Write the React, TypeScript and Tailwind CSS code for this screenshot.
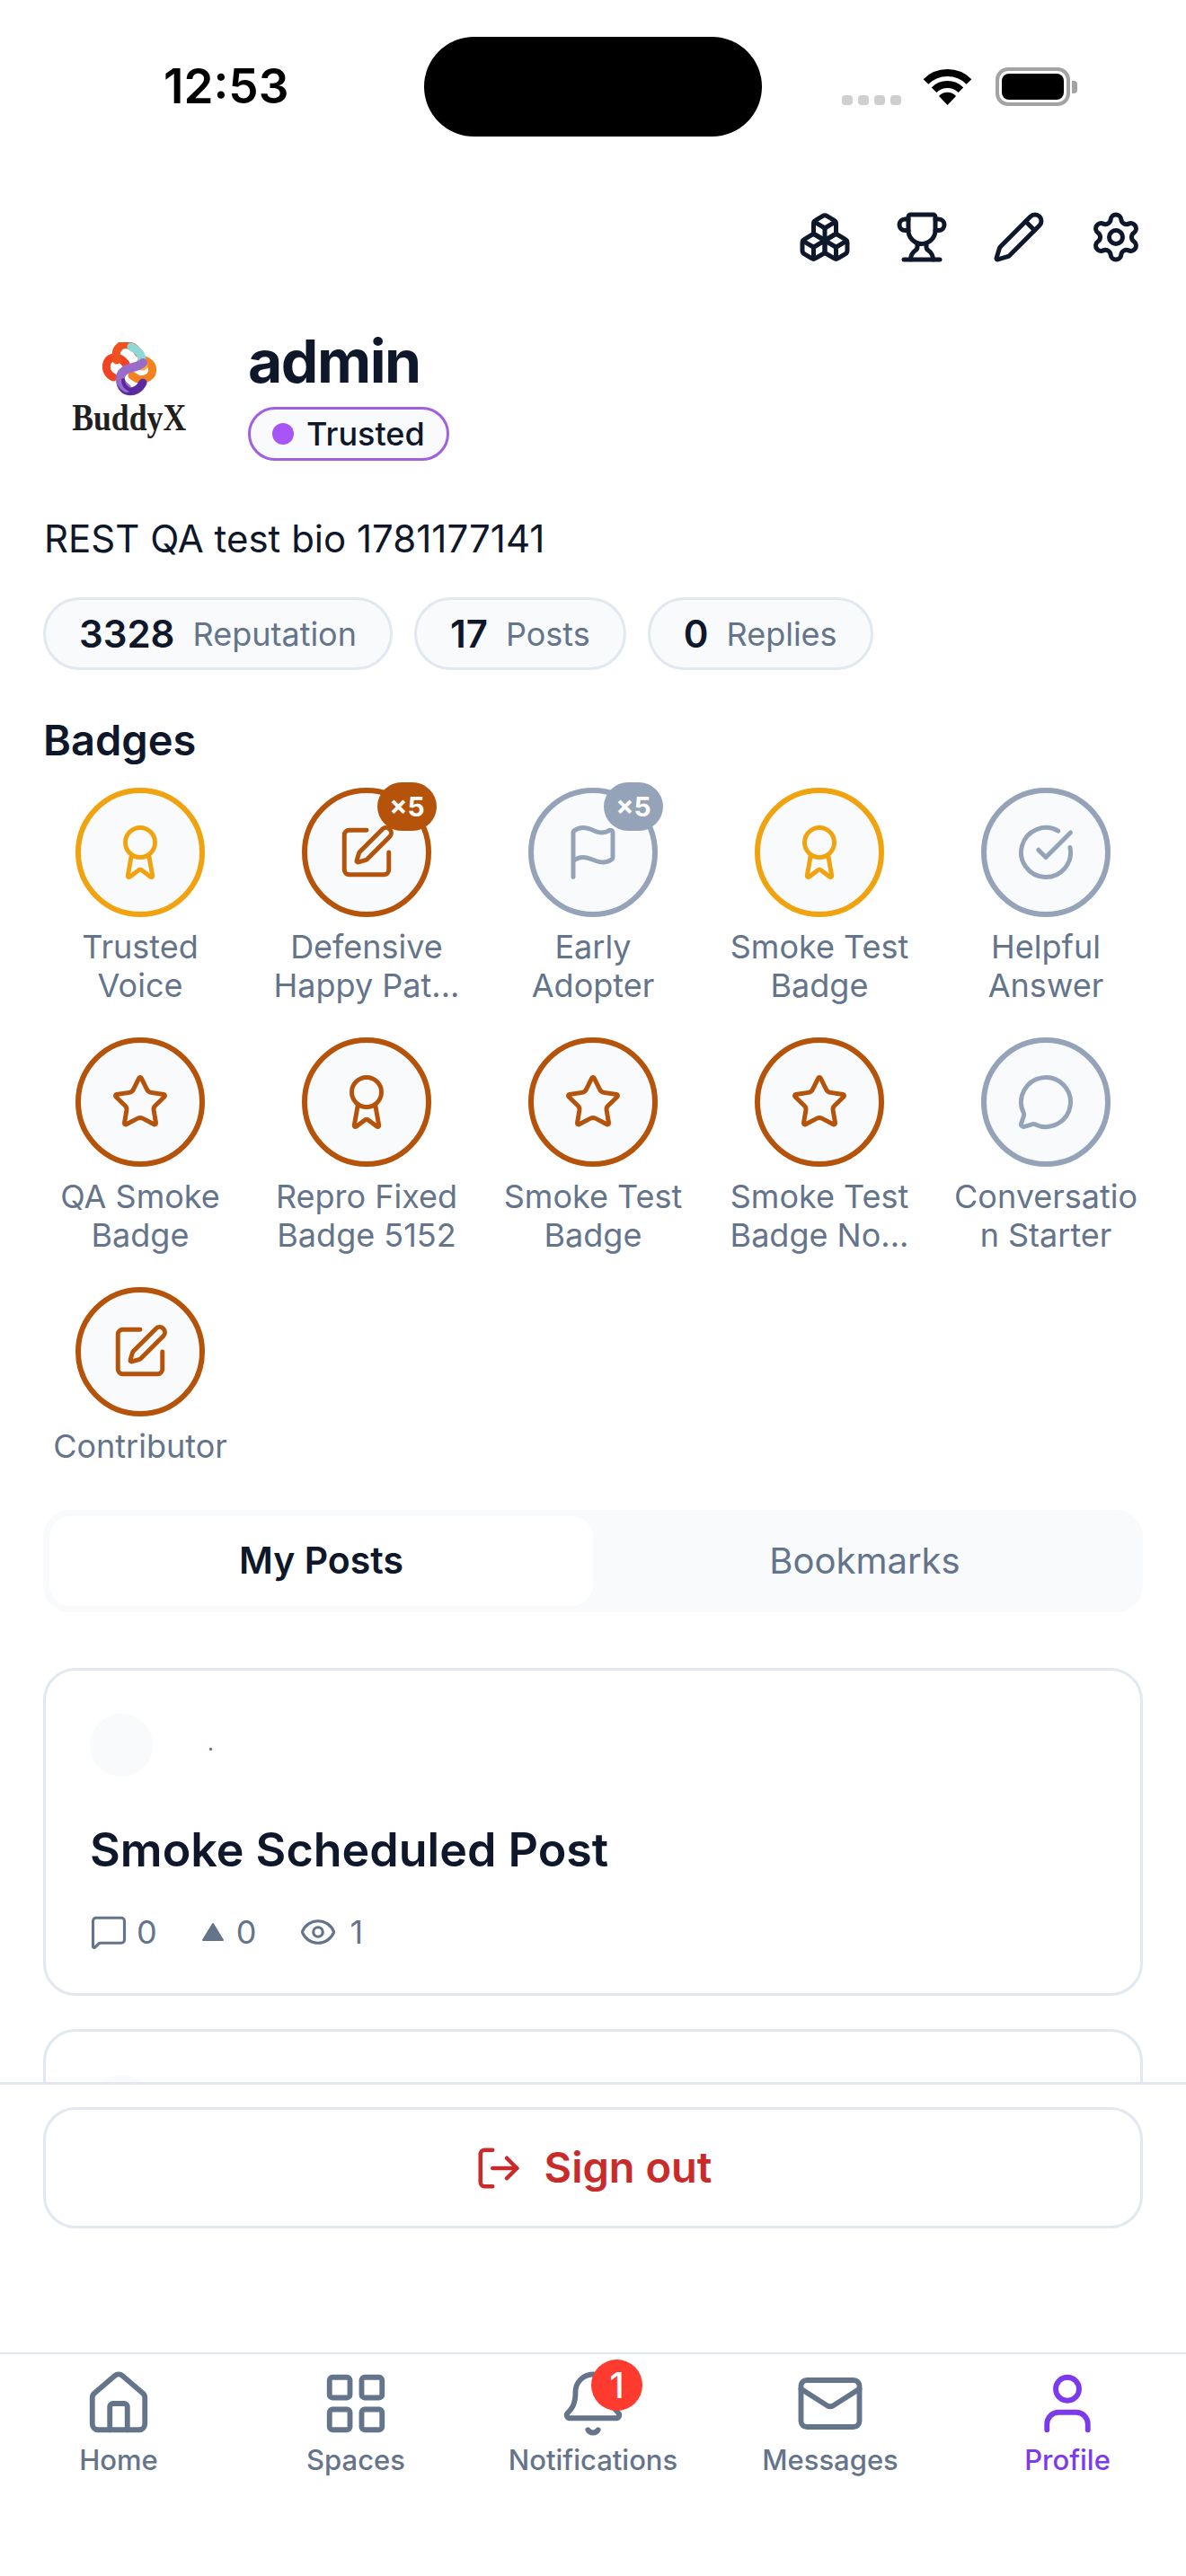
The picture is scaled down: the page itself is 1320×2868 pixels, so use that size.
import { Award, Bell, Boxes, CircleCheckBig, Eye, Flag, House, LayoutGrid, LogOut, Mail, MessageCircle, MessageSquare, Pencil, Settings, SquarePen, Star, Trophy, User } from "lucide-react"

const GOLD = { ring: "border-[#f0a30f]", icon: "text-[#f0a30f]", pill: "bg-[#f0a30f]" }
const BRONZE = { ring: "border-[#b45309]", icon: "text-[#b45309]", pill: "bg-[#b45309]" }
const GRAY = { ring: "border-[#94a3b8]", icon: "text-[#94a3b8]", pill: "bg-[#94a3b8]" }

const badges = [
  { label: "Trusted Voice", icon: Award, tier: GOLD },
  { label: "Defensive Happy Pat...", icon: SquarePen, tier: BRONZE, count: 5 },
  { label: "Early Adopter", icon: Flag, tier: GRAY, count: 5 },
  { label: "Smoke Test Badge", icon: Award, tier: GOLD },
  { label: "Helpful Answer", icon: CircleCheckBig, tier: GRAY },
  { label: "QA Smoke Badge", icon: Star, tier: BRONZE },
  { label: "Repro Fixed Badge 5152", icon: Award, tier: BRONZE },
  { label: "Smoke Test Badge", icon: Star, tier: BRONZE },
  { label: "Smoke Test Badge No...", icon: Star, tier: BRONZE },
  { label: "Conversation Starter", icon: MessageCircle, tier: GRAY },
  { label: "Contributor", icon: SquarePen, tier: BRONZE },
]

const stats = [
  { value: "3328", label: "Reputation" },
  { value: "17", label: "Posts" },
  { value: "0", label: "Replies" },
]

const tabs = [
  { label: "Home", icon: House },
  { label: "Spaces", icon: LayoutGrid },
  { label: "Notifications", icon: Bell, unread: 1 },
  { label: "Messages", icon: Mail },
  { label: "Profile", icon: User, active: true },
]

function StatusBar() {
  return (
    <div className="grid grid-cols-[1fr_376px_1fr] pt-[41px]">
      <div className="flex h-[111px] items-center pl-[182px] text-[53px] font-semibold leading-none text-black">12:53</div>
      <div className="h-[111px] rounded-[56px] bg-black" />
      <div className="flex h-[111px] items-start pl-[89px] pt-[34px]">
        <div className="mt-[31px] flex gap-[6px]">
          <span className="h-[11px] w-[12px] rounded-[4px] bg-[#cfcfcf]" />
          <span className="h-[11px] w-[12px] rounded-[4px] bg-[#cfcfcf]" />
          <span className="h-[11px] w-[12px] rounded-[4px] bg-[#cfcfcf]" />
          <span className="h-[11px] w-[12px] rounded-[4px] bg-[#cfcfcf]" />
        </div>
        <svg className="ml-[23px]" width="57" height="42" viewBox="0 0 57 42" fill="none">
          <path d="M4.5 16A34 34 0 0 1 52.5 16" stroke="#000" strokeWidth="8" />
          <path d="M13.6 25.2A21 21 0 0 1 43.4 25.2" stroke="#000" strokeWidth="8" />
          <path d="M28.5 42L19 32A13 13 0 0 1 38 32Z" fill="#000" />
        </svg>
        <div className="ml-[25px] flex items-center">
          <div className="h-[43px] w-[83px] rounded-[14px] border-[4px] border-[#a3a3a3] p-[3px]">
            <div className="h-full w-full rounded-[8px] bg-black" />
          </div>
          <div className="ml-[2px] h-[14px] w-[6px] rounded-r-[4px] bg-[#a3a3a3]" />
        </div>
      </div>
    </div>
  )
}

function BuddyXLogo() {
  return (
    <div className="flex h-[192px] w-[192px] flex-col items-center pt-[39px]">
      <svg width="60" height="60" viewBox="0 0 60 60" fill="none">
        <defs>
          <linearGradient id="lobeTop" x1="14" y1="20" x2="46" y2="4">
            <stop offset="0" stopColor="#f0521f" />
            <stop offset="1" stopColor="#fbbf24" />
          </linearGradient>
          <linearGradient id="lobeLeft" x1="8" y1="14" x2="14" y2="46">
            <stop offset="0" stopColor="#ef4423" />
            <stop offset="1" stopColor="#2f9be0" />
          </linearGradient>
          <linearGradient id="lobeBottom" x1="20" y1="50" x2="46" y2="50">
            <stop offset="0" stopColor="#5b2aa0" />
            <stop offset="1" stopColor="#ea2d62" />
          </linearGradient>
        </defs>
        <path d="M47 20C59 25 58 38 47 41C42 43 38 41 33 37" stroke="#f5801f" strokeWidth="9" strokeLinecap="round" />
        <path d="M45 21C50 25 47 30 43 28" stroke="#fbb034" strokeWidth="6" strokeLinecap="round" />
        <path d="M12 39C1 34 2 17 14 17C20 17 23 20 26 24" stroke="url(#lobeLeft)" strokeWidth="9" strokeLinecap="round" />
        <path d="M16 20C12 5 24 0 31 4C36 6 38 8 40 12" stroke="url(#lobeTop)" strokeWidth="9" strokeLinecap="round" />
        <path d="M20 40C18 57 38 60 45 45" stroke="url(#lobeBottom)" strokeWidth="9" strokeLinecap="round" />
        <path d="M32 5C41 10 47 16 42 24" stroke="#8ed8d8" strokeWidth="9" strokeLinecap="round" />
        <path d="M45 23C38 30 24 26 20 38C19 44 22 48 27 51" stroke="#9a6cc9" strokeWidth="10" strokeLinecap="round" />
        <path d="M23 42C23 48 27 52 33 54" stroke="#5a2ba0" strokeWidth="4" strokeLinecap="round" />
      </svg>
      <div className="origin-center scale-x-[0.85] font-['Liberation_Serif'] text-[42px] font-bold leading-[48px] text-[#1f1f1f]">BuddyX</div>
    </div>
  )
}

function BadgeItem({ badge }: { badge: (typeof badges)[number] }) {
  const Icon = badge.icon
  return (
    <div className="flex flex-col items-center">
      <div className={`relative flex h-[144px] w-[144px] items-center justify-center rounded-full border-[6px] bg-[#f8fafc] ${badge.tier.ring}`}>
        <Icon className={`h-[66px] w-[66px] ${badge.tier.icon}`} strokeWidth={1.8} />
        {badge.count && (
          <span className={`absolute right-[-12px] top-[-12px] flex h-[54px] w-[66px] items-center justify-center rounded-full text-[30px] font-bold leading-none text-white ${badge.tier.pill}`}>
            ×{badge.count}
          </span>
        )}
      </div>
      <div className="mt-[12px] w-[216px] break-words text-center text-[36px] leading-[43px] text-[#64748b]">{badge.label}</div>
    </div>
  )
}

function PostCard() {
  return (
    <div className="rounded-[36px] border-[3px] border-[#e2e8f0] bg-white px-[49px] pb-[47px] pt-[48px]">
      <div className="flex items-center">
        <div className="h-[70px] w-[70px] rounded-full bg-[#f8fafc]" />
        <span className="mb-[4px] ml-[61px] text-[24px] leading-none text-[#64748b]">.</span>
      </div>
      <h3 className="mt-[46px] text-[52px] font-semibold leading-[72px] text-[#0f172a]">Smoke Scheduled Post</h3>
      <div className="mt-[34px] flex h-[42px] items-center text-[36px] text-[#64748b]">
        <MessageSquare className="h-[42px] w-[42px]" strokeWidth={1.8} />
        <span className="ml-[10px]">0</span>
        <svg className="ml-[50px]" width="24" height="20" viewBox="0 0 24 20">
          <path d="M12 1L23 19H1Z" fill="#64748b" stroke="#64748b" strokeWidth="2" strokeLinejoin="round" />
        </svg>
        <span className="ml-[14px]">0</span>
        <Eye className="ml-[48px] h-[42px] w-[42px]" strokeWidth={1.8} />
        <span className="ml-[14px]">1</span>
      </div>
    </div>
  )
}

export default function App() {
  return (
    <div className="flex h-[2868px] w-[1320px] flex-col overflow-hidden bg-white font-['Inter',sans-serif]">
      <StatusBar />

      <div className="min-h-0 flex-1 overflow-hidden px-[48px]">
        <div className="mt-[82px] flex justify-end gap-[48px] text-[#0f172a]">
          <Boxes className="h-[60px] w-[60px]" />
          <Trophy className="h-[60px] w-[60px]" />
          <Pencil className="h-[60px] w-[60px]" />
          <Settings className="h-[60px] w-[60px]" />
        </div>

        <div className="mt-[48px] flex items-center gap-[36px]">
          <BuddyXLogo />
          <div>
            <h1 className="text-[66px] font-bold leading-[78px] tracking-[-1.5px] text-[#0f172a]">admin</h1>
            <div className="mt-[12px] inline-flex h-[60px] items-center gap-[14px] rounded-full border-[3px] border-[#a060e0] bg-[#f8fafc] px-[24px]">
              <span className="h-[24px] w-[24px] rounded-full bg-[#a855f7]" />
              <span className="text-[36px] font-medium leading-none text-[#0f172a]">Trusted</span>
            </div>
          </div>
        </div>

        <p className="mt-[36px] ml-[1px] text-[42px] leading-[60px] text-[#0f172a]">REST QA test bio 1781177141</p>

        <div className="mt-[35px] flex gap-[24px]">
          {stats.map((stat) => (
            <div key={stat.label} className="flex h-[81px] items-center gap-[20px] rounded-full border-[3px] border-[#e2e8f0] bg-[#f8fafc] px-[37px]">
              <span className="text-[42px] font-semibold text-[#0f172a]">{stat.value}</span>
              <span className="text-[36px] text-[#64748b]">{stat.label}</span>
            </div>
          ))}
        </div>

        <h2 className="mt-[48px] text-[47px] font-semibold leading-[60px] text-[#0f172a]">Badges</h2>

        <div className="mt-[23px] grid grid-cols-5 gap-x-[36px] gap-y-[36px]">
          {badges.map((badge, index) => (
            <BadgeItem key={index} badge={badge} />
          ))}
        </div>

        <div className="mt-[49px] flex h-[114px] rounded-[30px] bg-[#f8fafc] p-[7px]">
          <div className="flex flex-1 items-center justify-center rounded-[24px] bg-white text-[41px] font-semibold text-[#0f172a]">My Posts</div>
          <div className="flex flex-1 items-center justify-center text-[40px] text-[#64748b]">Bookmarks</div>
        </div>

        <div className="mt-[62px] flex flex-col gap-[37px]">
          <PostCard />
          {/* next post is scrolled behind the footer, only its top edge and avatar show */}
          <div className="rounded-[36px] border-[3px] border-[#e2e8f0] bg-white px-[49px] pb-[47px] pt-[48px]">
            <div className="h-[70px] w-[70px] rounded-full bg-[#f8fafc]" />
          </div>
        </div>
      </div>

      <div className="border-t-[3px] border-[#e2e8f0] bg-white px-[48px] pb-[138px] pt-[25px]">
        <button className="flex h-[135px] w-full items-center justify-center gap-[24px] rounded-[36px] border-[3px] border-[#e2e8f0] bg-white text-[47px] font-semibold text-[#c92a2a]">
          <LogOut className="h-[54px] w-[54px]" />
          Sign out
        </button>
      </div>

      <div className="grid h-[249px] grid-cols-5 border-t-[2px] border-[#e2e8f0] bg-white pt-[16px]">
        {tabs.map((tab) => {
          const Icon = tab.icon
          return (
            <div key={tab.label} className={`flex flex-col items-center ${tab.active ? "text-[#7c3aed]" : "text-[#64748b]"}`}>
              <div className="relative">
                <Icon className="h-[78px] w-[78px]" strokeWidth={1.8} />
                {tab.unread && (
                  <span className="absolute right-[-16px] top-[-10px] flex h-[57px] w-[57px] items-center justify-center rounded-full bg-[#ff3b30] text-[39px] font-medium leading-none text-white">
                    {tab.unread}
                  </span>
                )}
              </div>
              <span className="mt-[3px] text-[31px] font-medium leading-[42px]">{tab.label}</span>
            </div>
          )
        })}
      </div>
    </div>
  )
}
